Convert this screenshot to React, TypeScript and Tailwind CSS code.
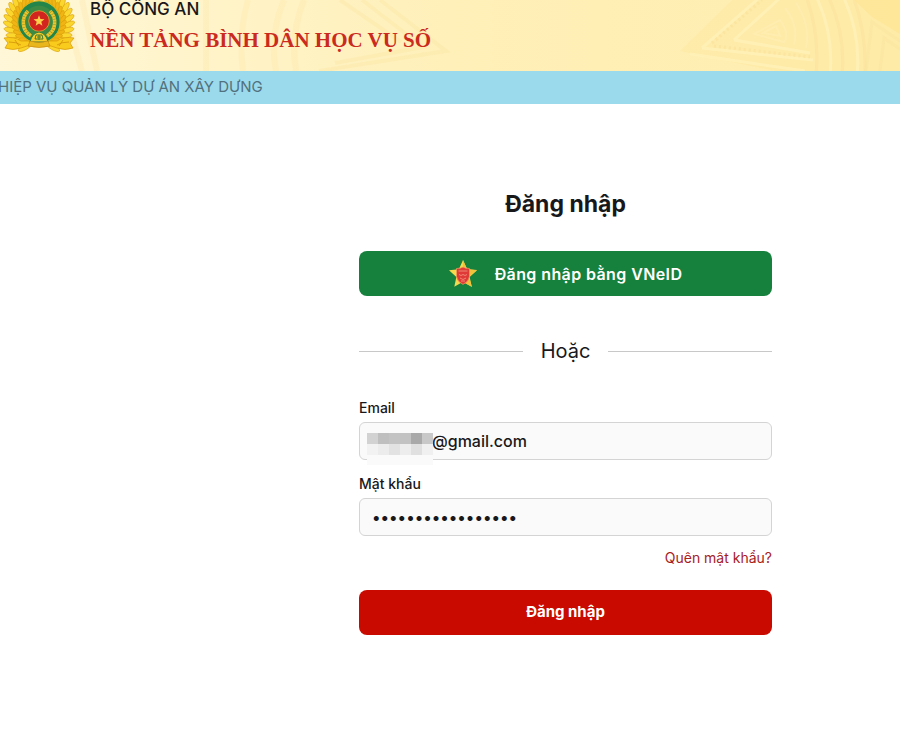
import type { ReactNode } from "react";

const tilesTop = ["bg-[#d2d2d2]", "bg-[#bfbfbf]", "bg-[#c3c3c3]", "bg-[#c2c2c2]", "bg-[#a9a9a9]", "bg-[#c8c8c8]"];
const tilesBottom = ["bg-[#f2f2f2]", "bg-[#ececec]", "bg-[#e2e2e2]", "bg-[#ededed]", "bg-[#e0e0e0]", "bg-[#f0f0f0]"];

function star(cx: number, cy: number, outer: number, inner: number) {
  return Array.from({ length: 10 }, (_, i) => {
    const r = i % 2 ? inner : outer;
    const a = (Math.PI / 5) * i - Math.PI / 2;
    return `${cx + r * Math.cos(a)},${cy + r * Math.sin(a)}`;
  }).join(" ");
}

function Emblem() {
  const leaves = Array.from({ length: 13 }, (_, i) => 20 + i * 11);
  return (
    <svg className="h-[60px] w-[72px] shrink-0" viewBox="0 0 72 60" aria-hidden="true">
      {[-1, 1].map((side) => (
        <g key={side} stroke="#d99f0c" strokeWidth="0.6">
          {leaves.map((a) => (
            <g key={a} transform={`translate(36 28) rotate(${side * a})`}>
              <ellipse cx="0" cy="-29" rx="2.6" ry="7.5" fill="#fbd72e" transform={`rotate(${side * -32} 0 -28)`} />
              <ellipse cx="0" cy="-24" rx="2" ry="5" fill="#f0b414" transform={`rotate(${side * -52} 0 -23)`} />
            </g>
          ))}
        </g>
      ))}
      <path d="M1 44q10-2 17 3h36q7-5 17-3l-4 5 3 5q-8 3-16 0l-6-2H24l-6 2q-8 3-16 0l3-5Z" fill="#f8cb1c" stroke="#dca00c" strokeWidth="0.8" />
      <path d="M6 48q8 0 12 3M66 48q-8 0-12 3M12 46l4 6M60 46l-4 6" fill="none" stroke="#cf8d08" strokeWidth="0.7" />
      <circle cx="36" cy="28" r="21.5" fill="#f8cf20" stroke="#dba40c" strokeWidth="0.8" />
      <circle cx="36" cy="28" r="18.5" fill="#3d8a45" stroke="#23854a" strokeWidth="4.5" />
      <path d="M28 42a16 16 0 0 1-3-25M44 42a16 16 0 0 0 3-25" fill="none" stroke="#f0c52c" strokeWidth="3.6" />
      <path d="M28 42a16 16 0 0 1-3-25M44 42a16 16 0 0 0 3-25" fill="none" stroke="#9f9824" strokeWidth="3" strokeDasharray="0.7 2" />
      <circle cx="36" cy="27" r="10.3" fill="#d3251f" stroke="#e4a929" strokeWidth="0.8" />
      <polygon points={star(36, 27, 5.8, 2.4)} fill="#ffcf4a" />
      <path d="M27 48q2-9 9-10 7 1 9 10Z" fill="#f7cf2b" stroke="#35823c" strokeWidth="1" />
      <path d="m32 45 1-4h6l1 4Zm2-2h4M36 41v5" fill="none" stroke="#42782c" />
      <path d="M27 47q9 3 18 0l2 5q-11 3-22 0Z" fill="#e9b71c" stroke="#cb8a13" strokeWidth="0.7" />
    </svg>
  );
}

function DrumPattern() {
  return (
    <svg className="absolute inset-0 h-full w-full" viewBox="0 0 900 71" preserveAspectRatio="xMaxYMid slice" fill="none" aria-hidden="true">
      <g stroke="#fae5a0" strokeOpacity="0.5">
        <path d="M680 51 732 0H900V71H775Z" fill="#fee9a4" fillOpacity="0.6" stroke="none" />
        <path d="m702 48 57-50M702 48l111 12M734 40l46-42M734 40l76 13M690 54l115 17M816-4q18 38 14 79M843-4q18 38 14 79" stroke="#fff1b8" strokeWidth="3" strokeOpacity="0.8" />
        <path d="m712 43 50-43M714 46l96 11" stroke="#f9df94" strokeWidth="3" strokeDasharray="2 3" />
        <path d="m754 34 26-14q10 14 4 22ZM763 33l13-7 4 10ZM785 8q14 17 9 36M796 3q15 22 10 45" strokeWidth="2" stroke="#fff0b8" />
        <path d="M806-4q14 38 10 79M828-4q18 38 14 79M853-4q14 38 12 79" stroke="#fae19a" strokeWidth="3" />
        <path d="M854 0h46v34l-28-17Z" fill="#fee696" fillOpacity="0.8" stroke="none" />
        <path d="m866 71 6-49 28 19M880 71l4-33 16 11" strokeWidth="3" />
        <path d="M380 0 446 51 319 71M362 0l61 47-88 16M340 0l61 42" strokeWidth="4" strokeOpacity="0.35" />
        <path d="M284 0q-15 35-8 71M304 0q-14 35-8 71M248 0q-10 35-5 71M206 0v71M82 0l15 71M62 0l20 71" strokeWidth="6" strokeOpacity="0.25" />
      </g>
    </svg>
  );
}

function StarBadge() {
  return (
    <svg className="size-7 shrink-0" viewBox="0 0 28 28" aria-hidden="true">
      <polygon points={star(14, 14.8, 14.8, 7)} fill="#f6d94c" />
      <path d="m14 0 4 9 10 1-8 7 3 10-9-5Z" fill="#f2c23c" />
      <path d="M7.5 8.5q4 0 6.500-1.500 2.500 1.500 6.500 1.500v8q-.5 5-6.500 8-6-3-6.500-8Z" fill="#df3a38" stroke="#f4a05e" strokeWidth="0.7" />
      <path d="M9.500 11h9M10 14.500q2 2 4 0 2 2 4 0M11 18q3 3 6 0M12 21h4" fill="none" stroke="#f2907c" strokeWidth="0.9" />
    </svg>
  );
}

function Field({ id, label, children }: { id: string; label: string; children: ReactNode }) {
  return (
    <div className="flex flex-col gap-1">
      <label htmlFor={id} className="text-sm font-medium leading-5">{label}</label>
      {children}
    </div>
  );
}

const inputStyle = "h-[38px] w-full rounded-md border border-[#d4d4d4] bg-[#fafafa] text-base font-medium outline-none";

export default function App() {
  return (
    <div className="min-h-screen bg-white font-['Inter','Noto_Sans',sans-serif] text-[#18181b]">
      <header className="relative h-[71px] overflow-hidden bg-linear-to-r from-[#fff7d7] via-[#fff0b9] to-[#ffedad]">
        <DrumPattern />
        <div className="relative flex gap-[15px] pl-[3px]">
          <div className="-mt-1.5"><Emblem /></div>
          <div>
            <p className="-mt-0.5 text-[17px] font-medium leading-[22px] whitespace-nowrap">BỘ CÔNG AN</p>
            <h1 className="font-['Liberation_Serif',serif] text-[21px] font-bold leading-10 whitespace-nowrap text-[#cb2a20]">NỀN TẢNG BÌNH DÂN HỌC VỤ SỐ</h1>
          </div>
        </div>
      </header>
      <div className="flex h-[33px] items-center overflow-hidden bg-[#9bdaec]">
        <p className="-ml-0.5 text-[15px] whitespace-nowrap text-[#52717c]">HIỆP VỤ QUẢN LÝ DỰ ÁN XÂY DỰNG</p>
      </div>
      <main className="pt-20 pr-32 pl-[359px]">
        <form onSubmit={(e) => e.preventDefault()}>
          <h2 className="text-center text-[23px] font-bold leading-10">Đăng nhập</h2>
          <button type="button" className="mt-[27px] flex h-[45px] w-full items-center justify-center gap-[18px] rounded-lg bg-[#16803d] text-base font-semibold tracking-wide text-white">
            <StarBadge />
            Đăng nhập bằng VNeID
          </button>
          <div className="mt-10 flex items-center gap-[18px] text-xl leading-[30px]">
            <span className="h-px flex-1 bg-[#c8c8c8]" />
            Hoặc
            <span className="h-px flex-1 bg-[#c8c8c8]" />
          </div>
          <div className="mt-8 flex flex-col gap-3.5">
            <Field id="email" label="Email">
              <div className="relative">
                <input id="email" type="text" defaultValue="@gmail.com" className={`${inputStyle} pl-[72px]`} />
                <div className="absolute top-[11px] left-2 w-[66px]" aria-hidden="true">
                  <div className="grid h-[11px] grid-cols-6">{tilesTop.map((c, i) => <span key={i} className={c} />)}</div>
                  <div className="grid h-[11px] grid-cols-6">{tilesBottom.map((c, i) => <span key={i} className={c} />)}</div>
                  <div className="h-[10px] bg-[#fafafa]" />
                </div>
              </div>
            </Field>
            <Field id="password" label="Mật khẩu">
              <input id="password" type="password" defaultValue="12345678901234567" className={`${inputStyle} px-3`} />
            </Field>
          </div>
          <div className="mt-3 flex justify-end">
            <a href="#" className="text-sm leading-5 text-[#a8201f]">Quên mật khẩu?</a>
          </div>
          <button type="submit" className="mt-[22px] h-[45px] w-full rounded-lg bg-[#c80a00] text-[15px] font-bold text-white">Đăng nhập</button>
        </form>
      </main>
    </div>
  );
}
